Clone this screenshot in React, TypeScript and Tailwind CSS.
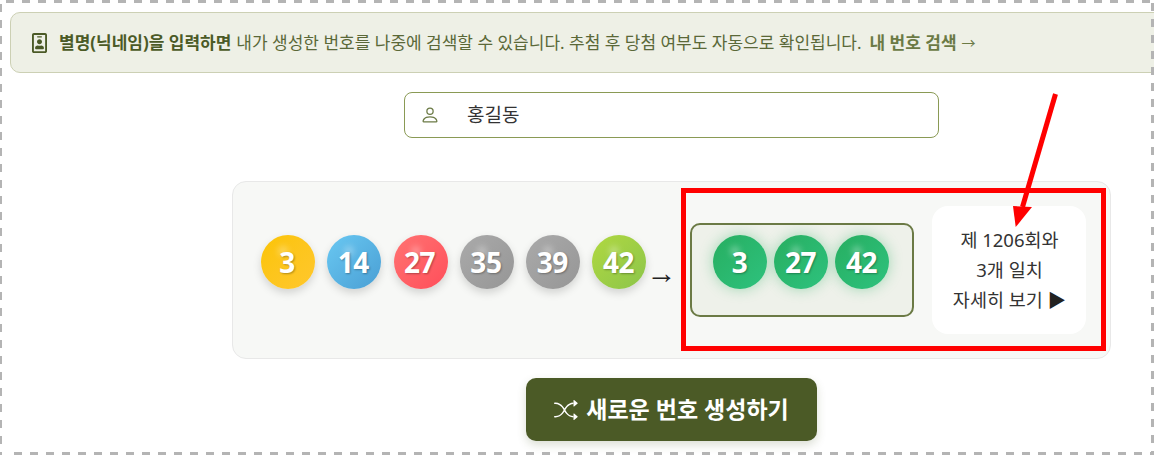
import { BsPerson, BsShuffle } from "react-icons/bs";
import { FaRegIdBadge } from "react-icons/fa";

const drawnBalls = [
  { n: 3, bg: "bg-gradient-to-br from-[#fbc400] to-[#ffc72c]" },
  { n: 14, bg: "bg-gradient-to-br from-[#69c8f2] to-[#4a9fd4]" },
  { n: 27, bg: "bg-gradient-to-br from-[#ff7272] to-[#ff4d5a]" },
  { n: 35, bg: "bg-gradient-to-br from-[#aaaaaa] to-[#969696]" },
  { n: 39, bg: "bg-gradient-to-br from-[#aaaaaa] to-[#969696]" },
  { n: 42, bg: "bg-gradient-to-br from-[#b0d840] to-[#8cc54a]" },
];

const matched = [3, 27, 42];

function Ball({ n, bg, glow }: { n: number; bg: string; glow?: boolean }) {
  return (
    <div
      className={`relative flex h-[54px] w-[54px] shrink-0 items-center justify-center rounded-full text-[28px] font-bold tracking-[-0.5px] text-white [text-shadow:1px_1px_2px_rgba(0,0,0,0.3)] ${bg} ${
        glow ? "shadow-[0_0_14px_rgba(39,174,96,0.4)]" : "shadow-[0_4px_8px_rgba(0,0,0,0.15)]"
      }`}
    >
      <span className="absolute left-[17px] top-[11px] h-[10px] w-[10px] rounded-full bg-white/30 blur-[3px]" />
      <span className="relative right-[1px]">{n}</span>
    </div>
  );
}

export default function App() {
  return (
    <div className="relative h-[455px] w-[1154px] overflow-hidden bg-white p-[3px] font-['Noto_Sans','Noto_Sans_CJK_KR',sans-serif]">
      {/* notice */}
      <div className="ml-[7px] mt-[9px] flex h-[61px] w-[1160px] items-center whitespace-nowrap rounded-[10px] border border-[#ccd0b4] bg-[#eef0e6] pl-[21px] text-[17px] text-[#5a6838]">
        <FaRegIdBadge className="mr-[12px] h-[20px] w-[15px] text-[#4b5a26]" />
        <span className="font-bold text-[#4b5a26]">별명(닉네임)을 입력하면</span>
        <span className="ml-[5px]">내가 생성한 번호를 나중에 검색할 수 있습니다. 추첨 후 당첨 여부도 자동으로 확인됩니다.</span>
        <span className="ml-[8px] font-bold text-[#6b7a45]">내 번호 검색</span>
        <span className="ml-[5px] text-[14px] text-[#6b7a45]">→</span>
      </div>

      <div className="ml-[229px] flex w-[879px] flex-col items-center">
        {/* nickname input */}
        <div className="mt-[19px] flex h-[46px] w-[535px] shrink-0 items-center rounded-[8px] border border-[#8a9a55] bg-white pl-[15px] text-[19px] text-[#333333]">
          <BsPerson className="h-[20px] w-[20px] text-[#6b7a45]" />
          <span className="ml-[27px] pt-[1px]">홍길동</span>
        </div>

        {/* result row */}
        <div className="mt-[43px] flex h-[178px] w-[879px] shrink-0 items-center rounded-[14px] border border-[#e8e8e8] bg-[#f7f8f6] pl-[28px]">
          <div className="mb-[16px] flex gap-[12.3px]">
            {drawnBalls.map((b) => (
              <Ball key={b.n} n={b.n} bg={b.bg} />
            ))}
          </div>
          <span className="mt-[5px] w-[26px] shrink-0 text-center font-['Liberation_Sans'] text-[30px] leading-none text-[#222222]">→</span>
          <div className="ml-[18px] flex h-[94px] w-[224px] shrink-0 gap-[7px] rounded-[10px] border-2 border-[#6b7a45] bg-[#eef1ea] pl-[21px] pt-[10px]">
            {matched.map((n) => (
              <Ball key={n} n={n} bg="bg-gradient-to-br from-[#27ae60] to-[#2ec27e]" glow />
            ))}
          </div>
          <div className="ml-[18px] flex h-[128px] w-[154px] shrink-0 flex-col items-center justify-center rounded-[16px] bg-white text-[18.5px] leading-[30px] text-[#333333]">
            <span>제 1206회와</span>
            <span>3개 일치</span>
            <span>
              자세히 보기 <span className="text-[#222222]">▶</span>
            </span>
          </div>
        </div>

        {/* generate button */}
        <button className="mt-[19px] flex h-[63px] w-[291px] shrink-0 items-center justify-center gap-[8px] whitespace-nowrap rounded-[10px] bg-[#4b5a26] text-[23px] font-bold text-white shadow-[0_4px_10px_rgba(75,90,38,0.2)]">
          <BsShuffle className="h-[24px] w-[24px]" />
          새로운 번호 생성하기
        </button>
      </div>

      {/* annotation */}
      <div className="absolute left-[681px] top-[188px] h-[163px] w-[425px] border-[5px] border-[#ff0000]" />
      <svg className="absolute left-[1000px] top-[91px]" width="70" height="145" viewBox="0 0 70 145">
        <line x1="55.5" y1="3" x2="22.5" y2="116" stroke="#ff0000" strokeWidth="5" />
        <polygon points="13,115 32,116 15.7,136" fill="#ff0000" />
      </svg>

      {/* dashed capture frame */}
      <svg className="absolute left-0 top-0" width="1154" height="455" viewBox="0 0 1154 455" fill="none" stroke="#b4b4b4" strokeDasharray="8 8">
        <line x1="6" y1="1.5" x2="1154" y2="1.5" strokeWidth="3" />
        <line x1="14" y1="453.5" x2="1154" y2="453.5" strokeWidth="3" />
        <line x1="1" y1="4" x2="1" y2="455" strokeWidth="2" />
        <line x1="1152.5" y1="3" x2="1152.5" y2="455" strokeWidth="3" />
      </svg>
    </div>
  );
}
